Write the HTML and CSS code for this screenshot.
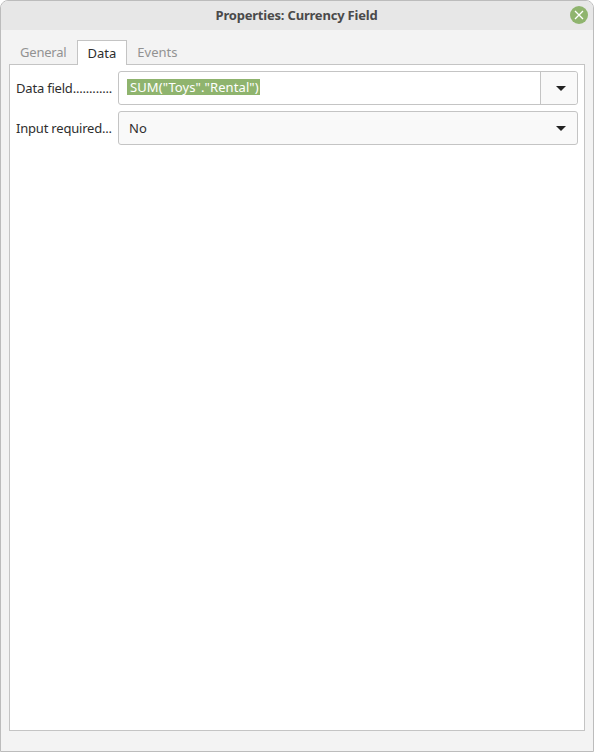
FILE: index.html
```html
<!DOCTYPE html>
<html lang="en">
<head>
  <meta charset="UTF-8">
  <meta name="viewport" content="width=device-width, initial-scale=1.0">
  <title>Properties: Currency Field</title>
  <link rel="stylesheet" href="styles.css">
</head>
<body>
  <div class="ventana">
    <header class="titulo">
      <span class="titulo-texto">Properties: Currency Field</span>
      <button class="cerrar" aria-label="Close">
        <svg width="10" height="10" viewBox="0 0 10 10">
          <path d="M1 1L9 9M9 1L1 9" stroke="#fff" stroke-width="1.3" fill="none"/>
        </svg>
      </button>
    </header>

    <div class="contenido">
      <nav class="pestanas">
        <span class="pestana general">General</span>
        <span class="pestana activa">Data</span>
        <span class="pestana">Events</span>
      </nav>

      <div class="panel">
        <div class="fila">
          <label class="etiqueta">Data field............</label>
          <div class="combo">
            <div class="combo-texto"><span class="seleccion">SUM("Toys"."Rental")</span></div>
            <div class="combo-boton"><span class="flecha"></span></div>
          </div>
        </div>
        <div class="fila">
          <label class="etiqueta">Input required...</label>
          <div class="lista">
            <span>No</span>
            <span class="flecha"></span>
          </div>
        </div>
      </div>
    </div>
  </div>
</body>
</html>
```

FILE: styles.css
```css
html, body {
  height: 100%;
}

body {
  margin: 0;
  background-color: #ffffff;
  font-family: "Noto Sans", sans-serif;
  font-size: 13px;
  color: #2e2e2e;
}

.ventana {
  box-sizing: border-box;
  height: 752px;
  border: 1px solid #bcbcbc;
  border-radius: 8px 8px 0 0;
  background-color: #f3f3f3;
  display: flex;
  flex-direction: column;
  overflow: hidden;
}

.titulo {
  height: 29px;
  flex: none;
  background-color: #e7e7e7;
  display: flex;
  align-items: center;
  justify-content: center;
  position: relative;
}

.titulo-texto {
  font-weight: 700;
  color: #4a4a4a;
  letter-spacing: -0.2px;
  margin-top: -1px;
  margin-right: 1px;
}

.cerrar {
  position: absolute;
  right: 5px;
  top: 5px;
  width: 18px;
  height: 18px;
  padding: 0;
  border: none;
  border-radius: 50%;
  background-color: #8fb46e;
  display: flex;
  align-items: center;
  justify-content: center;
}

.contenido {
  flex: 1;
  display: flex;
  flex-direction: column;
  padding: 10px 8px 20px 8px;
  min-height: 0;
}

.pestanas {
  height: 25px;
  flex: none;
  display: flex;
  padding-left: 1px;
  position: relative;
  z-index: 1;
}

.pestana {
  box-sizing: border-box;
  padding: 0 10px;
  height: 24px;
  line-height: 25px;
  color: #929292;
}

.general {
  letter-spacing: -0.2px;
}

.activa {
  height: 25px;
  background-color: #ffffff;
  border: 1px solid #c4c4c4;
  border-bottom: none;
  color: #2e2e2e;
  padding: 0 10px;
  line-height: 24px;
}

.panel {
  flex: 1;
  margin-top: -1px;
  background-color: #ffffff;
  border: 1px solid #c4c4c4;
  padding: 6px 6px 0 6px;
  display: flex;
  flex-direction: column;
  gap: 6px;
}

.fila {
  display: flex;
  align-items: center;
}

.etiqueta {
  width: 102px;
  flex: none;
  white-space: nowrap;
  overflow: hidden;
  letter-spacing: -0.2px;
}

.combo, .lista {
  box-sizing: border-box;
  flex: 1;
  height: 34px;
  border: 1px solid #c4c4c4;
  border-radius: 3px;
  display: flex;
  align-items: center;
}

.combo-texto {
  flex: 1;
  padding-left: 8px;
  margin-top: -2px;
}

.seleccion {
  background-color: #8fb46e;
  color: #ffffff;
  padding: 0 1px 0 3px;
  display: inline-block;
  line-height: 16px;
  letter-spacing: 0.1px;
}

.combo-boton {
  box-sizing: border-box;
  width: 37px;
  padding-left: 3px;
  align-self: stretch;
  background-color: #f9f9f9;
  border-left: 1px solid #c4c4c4;
  border-radius: 0 3px 3px 0;
  display: flex;
  align-items: center;
  justify-content: center;
}

.lista {
  background-color: #f9f9f9;
  justify-content: space-between;
  padding: 0 11px 0 10px;
}

.flecha {
  width: 0;
  height: 0;
  border-left: 5px solid transparent;
  border-right: 5px solid transparent;
  border-top: 5px solid #222222;
}
```
